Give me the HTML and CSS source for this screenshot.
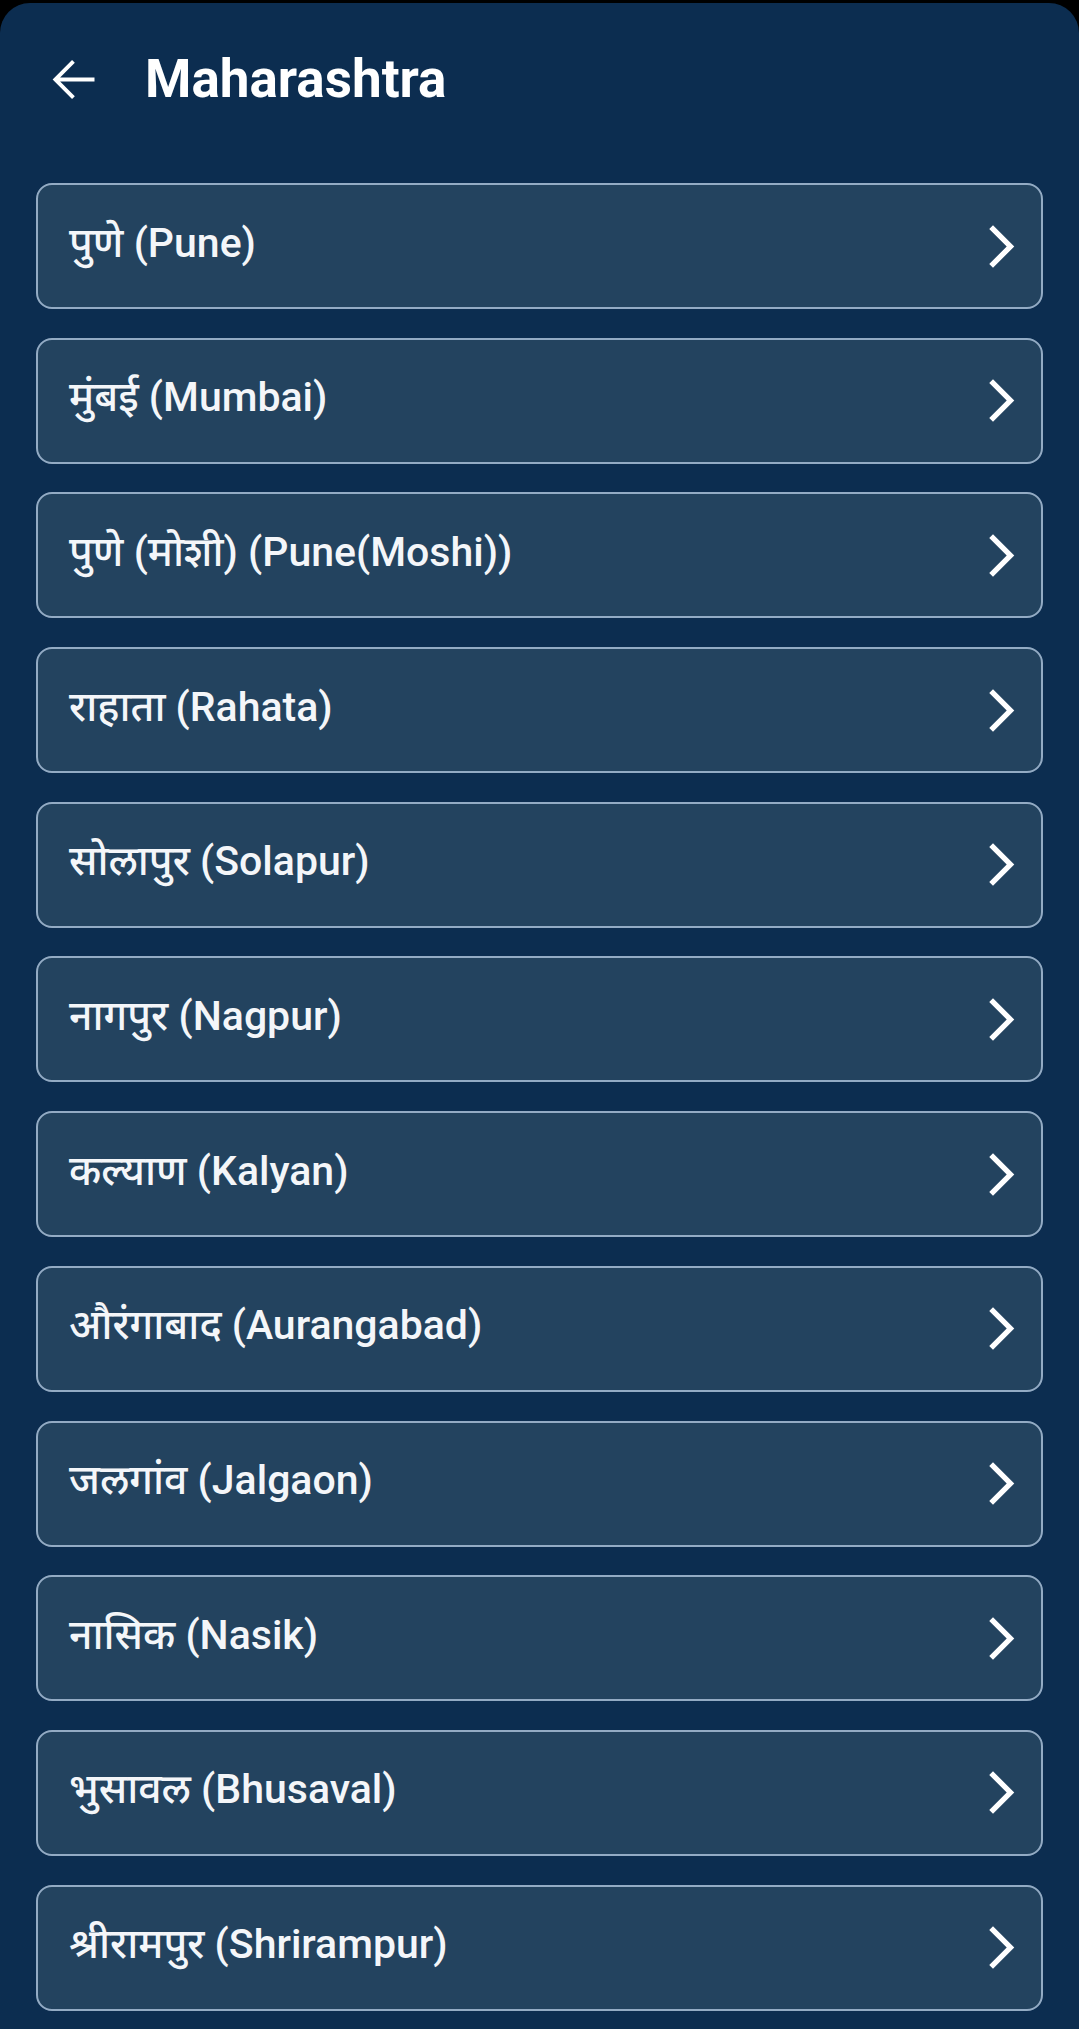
FILE: index.html
```html
<!DOCTYPE html>
<html lang="mr">
  <head>
    <meta charset="UTF-8" />
    <meta name="viewport" content="width=device-width, initial-scale=1.0" />
    <title>Maharashtra</title>
    <link rel="stylesheet" href="styles.css">
  </head>
  <body>
    <div class="screen">
      <header class="top-bar">
        <button class="back-btn" aria-label="Back">
          <svg viewBox="0 0 24 24" width="63" height="63">
            <path d="M20 11.25H6.9l5.6-5.6L11.45 4.6 4.05 12l7.4 7.4 1.05-1.05-5.6-5.6H20z" fill="#fff" />
          </svg>
        </button>
        <h1>Maharashtra</h1>
      </header>
      <ul class="city-list">
        <li class="city-item"><span>पुणे (Pune)</span><svg class="chevron" viewBox="0 0 24 24"><path d="M6.23 20.23 8 22l10-10L8 2 6.23 3.77 14.46 12z" /></svg></li>
        <li class="city-item"><span>मुंबई (Mumbai)</span><svg class="chevron" viewBox="0 0 24 24"><path d="M6.23 20.23 8 22l10-10L8 2 6.23 3.77 14.46 12z" /></svg></li>
        <li class="city-item"><span>पुणे (मोशी) (Pune(Moshi))</span><svg class="chevron" viewBox="0 0 24 24"><path d="M6.23 20.23 8 22l10-10L8 2 6.23 3.77 14.46 12z" /></svg></li>
        <li class="city-item"><span>राहाता (Rahata)</span><svg class="chevron" viewBox="0 0 24 24"><path d="M6.23 20.23 8 22l10-10L8 2 6.23 3.77 14.46 12z" /></svg></li>
        <li class="city-item"><span>सोलापुर (Solapur)</span><svg class="chevron" viewBox="0 0 24 24"><path d="M6.23 20.23 8 22l10-10L8 2 6.23 3.77 14.46 12z" /></svg></li>
        <li class="city-item"><span>नागपुर (Nagpur)</span><svg class="chevron" viewBox="0 0 24 24"><path d="M6.23 20.23 8 22l10-10L8 2 6.23 3.77 14.46 12z" /></svg></li>
        <li class="city-item"><span>कल्याण (Kalyan)</span><svg class="chevron" viewBox="0 0 24 24"><path d="M6.23 20.23 8 22l10-10L8 2 6.23 3.77 14.46 12z" /></svg></li>
        <li class="city-item"><span>औरंगाबाद (Aurangabad)</span><svg class="chevron" viewBox="0 0 24 24"><path d="M6.23 20.23 8 22l10-10L8 2 6.23 3.77 14.46 12z" /></svg></li>
        <li class="city-item"><span>जलगांव (Jalgaon)</span><svg class="chevron" viewBox="0 0 24 24"><path d="M6.23 20.23 8 22l10-10L8 2 6.23 3.77 14.46 12z" /></svg></li>
        <li class="city-item"><span>नासिक (Nasik)</span><svg class="chevron" viewBox="0 0 24 24"><path d="M6.23 20.23 8 22l10-10L8 2 6.23 3.77 14.46 12z" /></svg></li>
        <li class="city-item"><span>भुसावल (Bhusaval)</span><svg class="chevron" viewBox="0 0 24 24"><path d="M6.23 20.23 8 22l10-10L8 2 6.23 3.77 14.46 12z" /></svg></li>
        <li class="city-item"><span>श्रीरामपुर (Shrirampur)</span><svg class="chevron" viewBox="0 0 24 24"><path d="M6.23 20.23 8 22l10-10L8 2 6.23 3.77 14.46 12z" /></svg></li>
      </ul>
    </div>
  </body>
</html>
```

FILE: styles.css
```css
html,
body {
  margin: 0;
  background: #000;
}
body {
  font-family: Roboto, "Noto Sans Devanagari", "Noto Sans", "DejaVu Sans", sans-serif;
  color: #fff;
}
.screen {
  margin-top: 3px;
  min-height: 2026px;
  background: #0c2d50;
  border-radius: 30px 30px 0 0;
  overflow: hidden;
}
.top-bar {
  display: flex;
  align-items: center;
  height: 152px;
  padding-left: 42px;
  gap: 40px;
}
.back-btn {
  width: 63px;
  height: 63px;
  padding: 0;
  border: none;
  background: none;
  cursor: pointer;
}
.back-btn svg {
  display: block;
}
.top-bar h1 {
  margin: 0;
  font-size: 53px;
  font-weight: bold;
}
.city-list {
  list-style: none;
  margin: 0;
  padding: 28px 36px 0;
  display: flex;
  flex-direction: column;
  gap: 28.7px;
}
.city-item {
  display: flex;
  align-items: center;
  justify-content: space-between;
  height: 126px;
  box-sizing: border-box;
  padding: 0 14px 0 31px;
  background: #23435f;
  border: 2px solid #93abc4;
  border-radius: 16px;
  font-size: 41px;
  font-weight: 500;
  color: #f4f6f9;
}
.chevron {
  width: 51px;
  height: 51px;
  fill: #fff;
}
```
